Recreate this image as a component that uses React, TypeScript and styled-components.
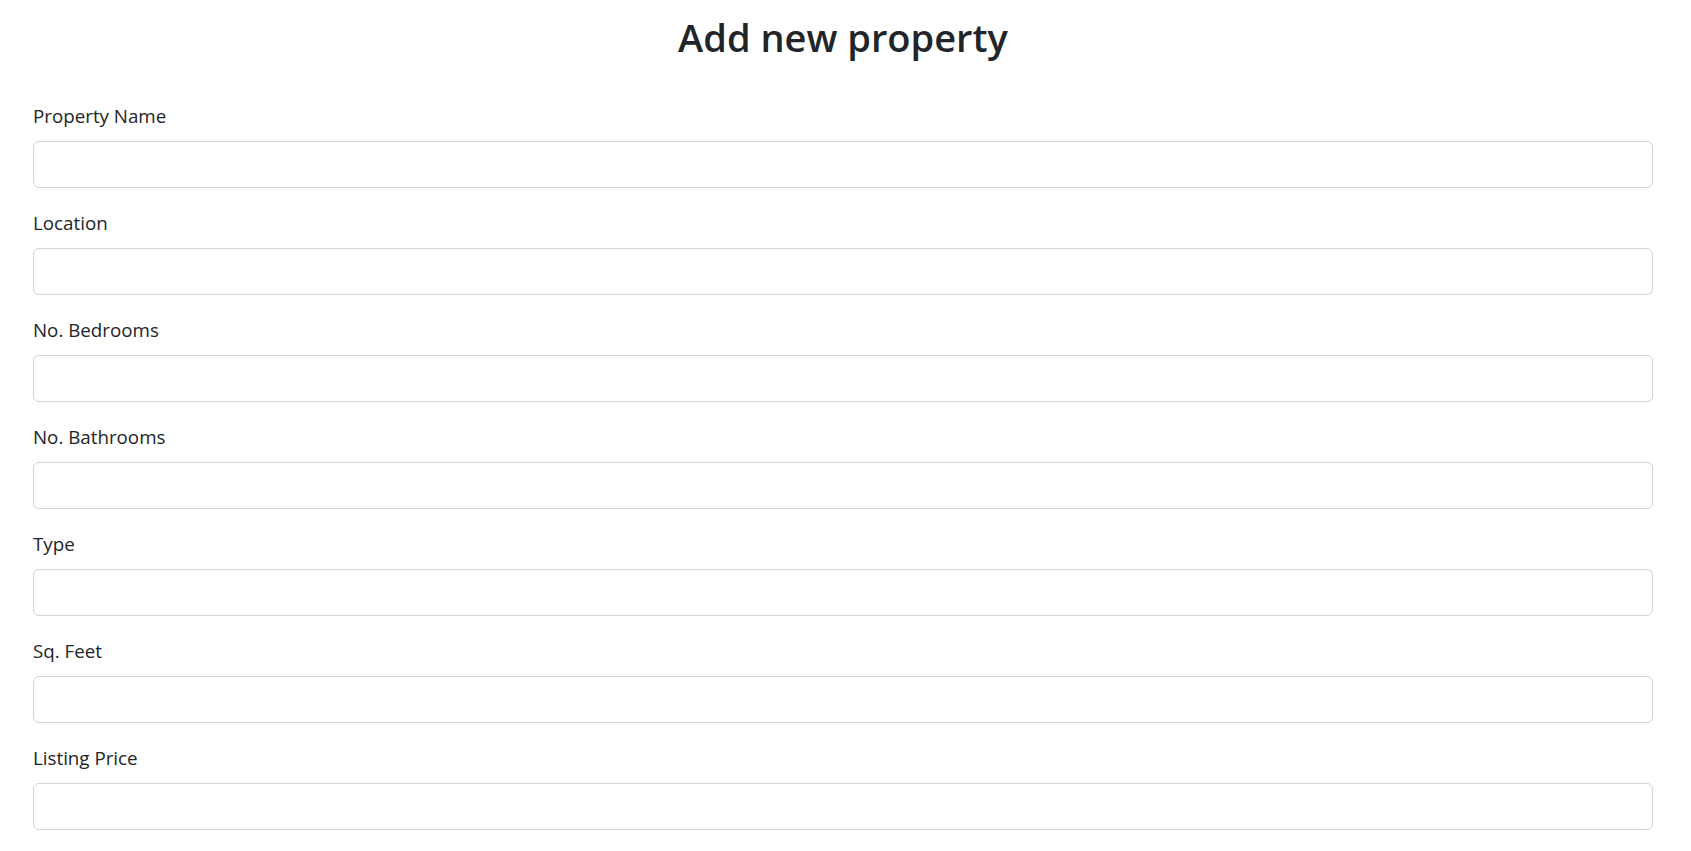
import styled, { createGlobalStyle } from 'styled-components';

const GlobalStyle = createGlobalStyle`
  *, *::before, *::after {
    box-sizing: border-box;
  }

  body {
    margin: 0;
    background: #fff;
    color: #212529;
    font-family: "Open Sans", "Noto Sans", "Liberation Sans", sans-serif;
  }
`;

const Page = styled.main`
  padding: 0 38px 0 33px;
`;

const Title = styled.h1`
  margin: 0;
  padding: 12px 0 0;
  height: 97px;
  text-align: center;
  font-size: 38px;
  font-weight: 600;
  line-height: 50px;
  color: #212529;
`;

const Form = styled.form`
  display: grid;
  gap: 16px;
`;

const Group = styled.div`
  display: grid;
  gap: 9px;
`;

const Label = styled.label`
  display: block;
  padding-top: 3px;
  font-size: 18.75px;
  line-height: 32px;
  color: #212529;
`;

const Input = styled.input`
  display: block;
  width: 100%;
  height: 47px;
  padding: 8px 16px;
  font: inherit;
  font-size: 20px;
  color: #495057;
  background: #fff;
  border: 1px solid #ced4da;
  border-radius: 6px;
  outline: none;
`;

const fields = [
  'Property Name',
  'Location',
  'No. Bedrooms',
  'No. Bathrooms',
  'Type',
  'Sq. Feet',
  'Listing Price',
];

export default function App() {
  return (
    <>
      <GlobalStyle />
      <Page>
        <Title>Add new property</Title>
        <Form>
          {fields.map((name) => {
            const id = name.toLowerCase().replace(/[^a-z]+/g, '-');
            return (
              <Group key={name}>
                <Label htmlFor={id}>{name}</Label>
                <Input id={id} type="text" />
              </Group>
            );
          })}
        </Form>
      </Page>
    </>
  );
}
